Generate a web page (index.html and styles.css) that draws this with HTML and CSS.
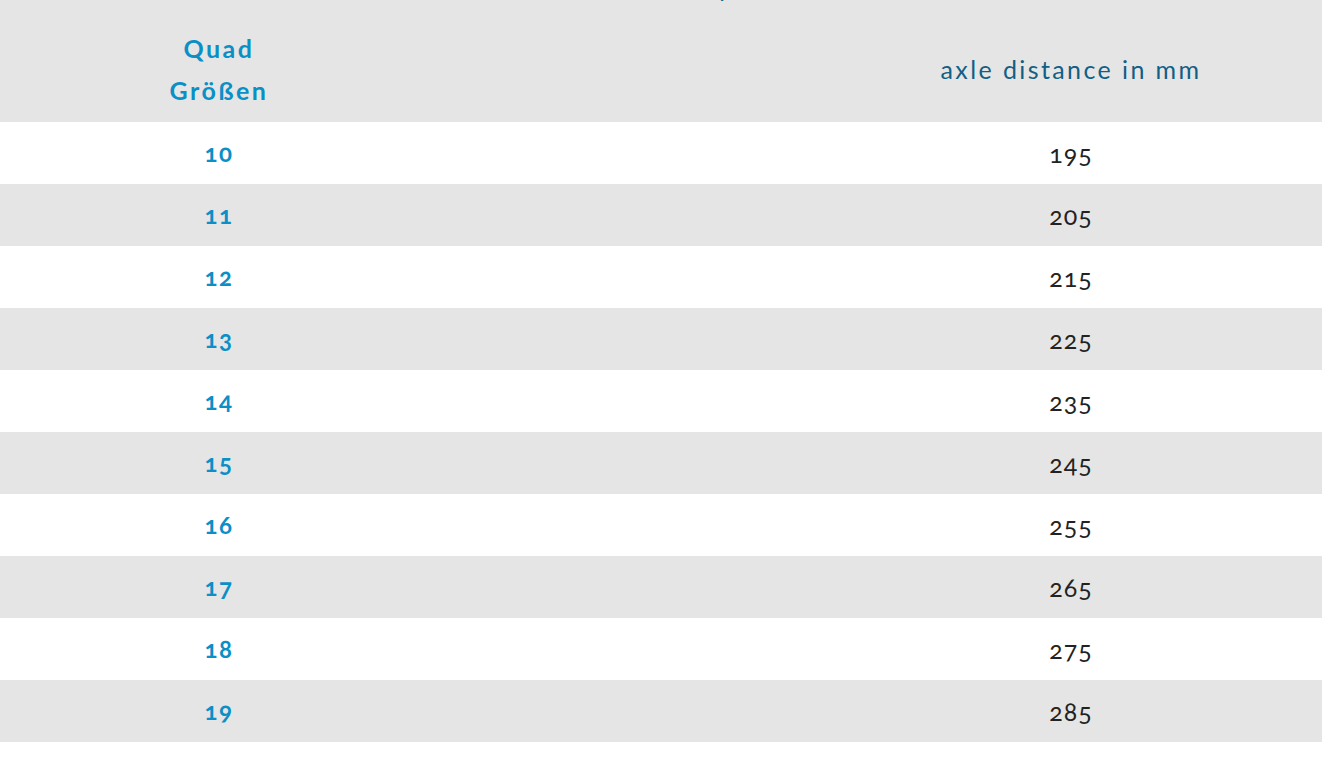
FILE: index.html
```html
<!DOCTYPE html>
<html lang="de">
<head>
<meta charset="utf-8">
<title>Quad Größen</title>
<link rel="stylesheet" href="styles.css">
</head>
<body>
<div class="chart">
  <div class="row head">
    <div class="cell size">Quad<br>Größen</div>
    <div class="cell mid">Achsabstand by</div>
    <div class="cell value">axle distance in mm</div>
  </div>
  <div class="row"><div class="cell size">10</div><div class="cell mid"></div><div class="cell value">195</div></div>
  <div class="row alt"><div class="cell size">11</div><div class="cell mid"></div><div class="cell value">205</div></div>
  <div class="row"><div class="cell size">12</div><div class="cell mid"></div><div class="cell value">215</div></div>
  <div class="row alt"><div class="cell size">13</div><div class="cell mid"></div><div class="cell value">225</div></div>
  <div class="row"><div class="cell size">14</div><div class="cell mid"></div><div class="cell value">235</div></div>
  <div class="row alt"><div class="cell size">15</div><div class="cell mid"></div><div class="cell value">245</div></div>
  <div class="row"><div class="cell size">16</div><div class="cell mid"></div><div class="cell value">255</div></div>
  <div class="row alt"><div class="cell size">17</div><div class="cell mid"></div><div class="cell value">265</div></div>
  <div class="row"><div class="cell size">18</div><div class="cell mid"></div><div class="cell value">275</div></div>
  <div class="row alt"><div class="cell size">19</div><div class="cell mid"></div><div class="cell value">285</div></div>
</div>
</body>
</html>
```
FILE: styles.css
```css
html, body {
  margin: 0;
  padding: 0;
  background: #ffffff;
}
body {
  font-family: "Lato", "Open Sans", sans-serif;
  font-size: 24px;
  font-variant-numeric: oldstyle-nums;
  overflow: hidden;
}
.chart {
  display: flex;
  flex-direction: column;
  width: 1322px;
}
.row {
  display: grid;
  grid-template-columns: 438px 382px 502px;
  align-items: center;
  height: 62px;
  background: #ffffff;
}
.row.alt {
  background: #e5e5e5;
}
.row.head {
  height: 106px;
  padding-top: 16px;
  background: #e5e5e5;
}
.cell {
  text-align: center;
  line-height: 42px;
}
.size {
  color: #0a8fc6;
  font-weight: 700;
  letter-spacing: 1.5px;
}
.head .size {
  font-size: 25px;
  letter-spacing: 2.5px;
}
.value {
  color: #222222;
  font-size: 25px;
  letter-spacing: 1px;
}
.head .value {
  color: #115f86;
  letter-spacing: 2.4px;
}
.head .mid {
  align-self: start;
  margin-top: -49px;
  text-align: right;
  padding-right: 90px;
  color: #115f86;
}
```
